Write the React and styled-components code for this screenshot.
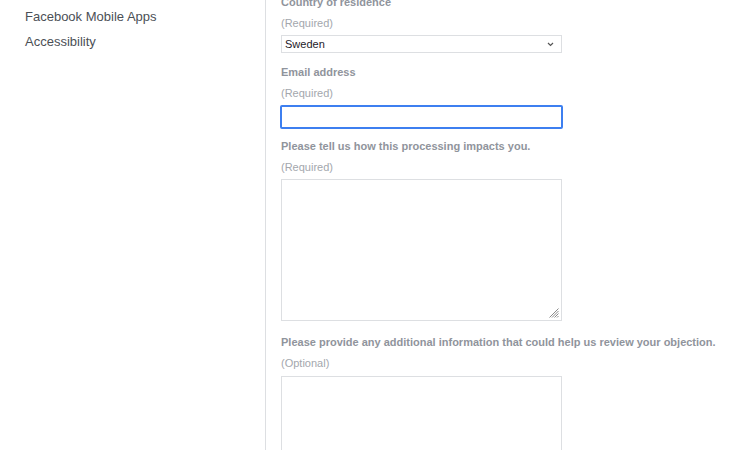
import styled, { createGlobalStyle } from "styled-components";

const GlobalStyle = createGlobalStyle`
    html, body {
        margin: 0;
        padding: 0;
        background: #fff;
        font-family: "Liberation Sans", Arial, Helvetica, sans-serif;
    }
`;

const Page = styled.div`
    display: flex;
    align-items: stretch;
    min-height: 460px;
    margin-top: -6px;
`;

const Sidebar = styled.nav`
    width: 266px;
    flex-shrink: 0;
    border-right: 1px solid #dddfe2;
    padding: 10px 0 0 25px;
    box-sizing: border-box;
`;

const NavLink = styled.a`
    display: block;
    font-size: 13px;
    line-height: 25px;
    color: #4b4f56;
    text-decoration: none;
`;

const Form = styled.form`
    display: flex;
    flex-direction: column;
    padding-left: 15px;
`;

const Field = styled.div`
    display: flex;
    flex-direction: column;
    margin-bottom: ${(p) => p.$gap || 11}px;
`;

const Label = styled.label`
    font-size: 11px;
    font-weight: bold;
    line-height: 16px;
    color: #90949c;
    white-space: nowrap;
`;

const Hint = styled.span`
    font-size: 11px;
    line-height: 16px;
    margin-top: 5px;
    color: #a3a7ad;
`;

const SelectBox = styled.div`
    position: relative;
    margin-top: 4px;
    width: 281px;
    height: 18px;
    border: 1px solid #dddfe2;
    box-sizing: border-box;
    display: flex;
    align-items: center;
    padding-left: 3px;
    font-size: 11px;
    color: #1d2129;
`;

const Chevron = styled.svg`
    position: absolute;
    right: 7px;
    top: 6px;
`;

const TextInput = styled.div`
    margin-top: 4px;
    margin-left: -1px;
    width: 283px;
    height: 24px;
    border: 2px solid #3d7ff0;
    border-radius: 2px;
    box-sizing: border-box;
`;

const TextArea = styled.div`
    position: relative;
    margin-top: ${(p) => p.$top || 4}px;
    width: 281px;
    height: ${(p) => p.$h}px;
    border: 1px solid #dddfe2;
    box-sizing: border-box;
`;

const Grip = styled.svg`
    position: absolute;
    right: 2px;
    bottom: 2px;
`;

const ResizeGrip = () => (
    <Grip width="11" height="11" viewBox="0 0 11 11">
        <path
            d="M10.5 1.5 L1.5 10.5 M10.5 4 L4 10.5 M10.5 6.5 L6.5 10.5 M10.5 9 L9 10.5"
            stroke="#8a8a8a"
            strokeWidth="1"
        />
    </Grip>
);

const App = () => {
    return (
        <>
            <GlobalStyle />
            <Page>
                <Sidebar>
                    <NavLink href="#">Facebook Mobile Apps</NavLink>
                    <NavLink href="#">Accessibility</NavLink>
                </Sidebar>
                <Form>
                    <Field>
                        <Label>Country of residence</Label>
                        <Hint>(Required)</Hint>
                        <SelectBox>
                            Sweden
                            <Chevron width="7" height="5" viewBox="0 0 7 5">
                                <path d="M1 1 L3.5 3.5 L6 1" stroke="#555" strokeWidth="1.2" fill="none" />
                            </Chevron>
                        </SelectBox>
                    </Field>
                    <Field $gap={9}>
                        <Label>Email address</Label>
                        <Hint>(Required)</Hint>
                        <TextInput />
                    </Field>
                    <Field $gap={13}>
                        <Label>Please tell us how this processing impacts you.</Label>
                        <Hint>(Required)</Hint>
                        <TextArea $h={142}>
                            <ResizeGrip />
                        </TextArea>
                    </Field>
                    <Field>
                        <Label>
                            Please provide any additional information that could help us review your objection.
                        </Label>
                        <Hint>(Optional)</Hint>
                        <TextArea $h={142} $top={5} />
                    </Field>
                </Form>
            </Page>
        </>
    );
};

export default App;
